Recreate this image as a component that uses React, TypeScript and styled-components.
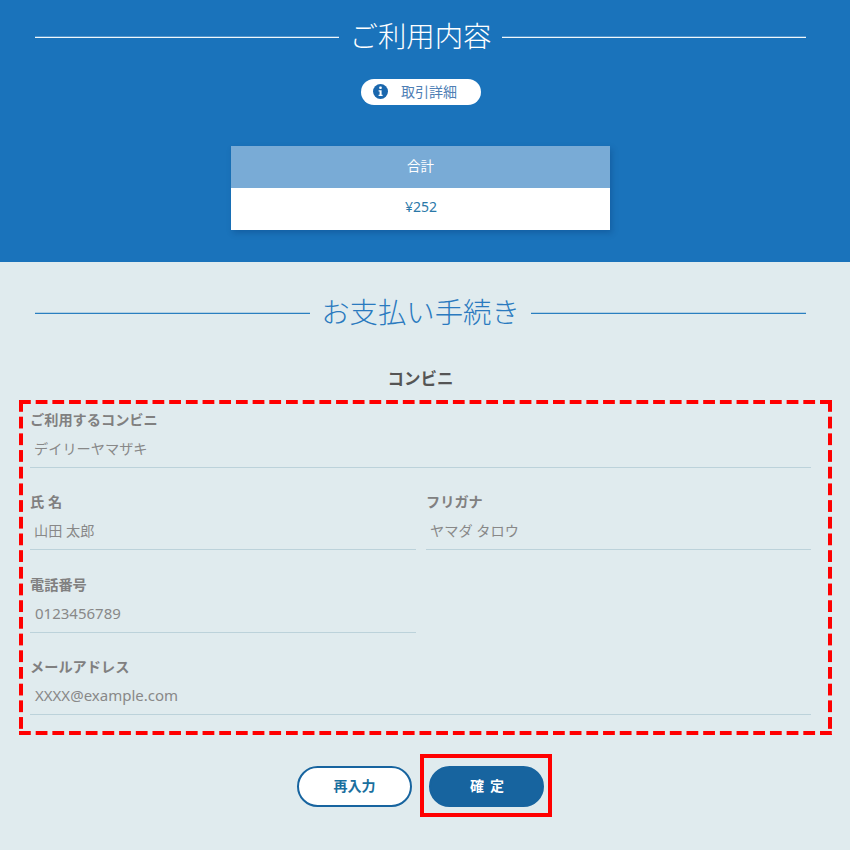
import styled, { createGlobalStyle } from "styled-components";

const GlobalStyle = createGlobalStyle`
  html, body {
    margin: 0;
    padding: 0;
    height: 850px;
    overflow: hidden;
    background: #e0ebee;
    font-family: "Noto Sans", "Noto Sans CJK JP", sans-serif;
  }
`;

const UsageSection = styled.section`
  height: 262px;
  box-sizing: border-box;
  background: #1a73bb;
  padding: 0 44px 0 35px;
  display: flex;
  flex-direction: column;
  align-items: center;
`;

const SectionTitle = styled.h2<{ $light?: boolean }>`
  align-self: stretch;
  box-sizing: border-box;
  height: 70px;
  margin: 0;
  padding-bottom: 2px;
  display: flex;
  align-items: center;
  gap: 11px;
  font-size: 28.4px;
  font-weight: 300;
  white-space: nowrap;
  color: ${(p) => (p.$light ? "#ffffff" : "#2a7abf")};

  &::before,
  &::after {
    content: "";
    flex: 1;
    height: 1px;
    margin-top: 6px;
    background: ${(p) => (p.$light ? "#f0f7fb" : "#2a7fc0")};
    box-shadow: 0 -1px 0
      ${(p) => (p.$light ? "rgba(255, 255, 255, 0.25)" : "rgba(42, 127, 192, 0.25)")};
  }
`;

const DetailPill = styled.button`
  width: 120px;
  height: 26px;
  margin: 9px 0 0 1px;
  padding: 0 0 2px 12px;
  border: 0;
  border-radius: 13px;
  background: #fff;
  color: #4f7fb5;
  font: 400 14px "Noto Sans CJK JP", sans-serif;
  display: flex;
  align-items: center;
  gap: 13px;
`;

const TotalCard = styled.div`
  width: 379px;
  margin-top: 41px;
  box-shadow: 2px 3px 6px rgba(0, 40, 90, 0.25);
`;

const TotalHead = styled.div`
  height: 37px;
  padding-bottom: 5px;
  display: flex;
  align-items: center;
  justify-content: center;
  background: #79abd6;
  color: #fff;
  font-size: 13.5px;
`;

const TotalValue = styled.div`
  height: 37px;
  padding: 0 0 5px 1px;
  display: flex;
  align-items: center;
  justify-content: center;
  background: #fff;
  color: #2a78a8;
  font-size: 14px;
`;

const PaymentSection = styled.section`
  padding: 14px 9px 0 0;
`;

const TitleRow = styled.div`
  padding: 0 35px;
`;

const MethodName = styled.h3`
  margin: 19px 0 0;
  height: 27px;
  line-height: 27px;
  text-align: center;
  font-size: 16.5px;
  font-weight: 700;
  color: #555;
`;

const dash = "linear-gradient(to right, #ff0000 12px, transparent 12px)";
const dashV = "linear-gradient(to bottom, #ff0000 12px, transparent 12px)";

const FormFrame = styled.div`
  box-sizing: border-box;
  width: 813px;
  height: 335px;
  margin: 8px 0 0 19px;
  padding: 10px 21px 0 11px;
  background-image: ${dash}, ${dash}, ${dashV}, ${dashV};
  background-size: 16.7px 4px, 16.7px 4px, 4px 16.7px, 4px 16.7px;
  background-position: 0 0, 0 100%, 0 0, 100% 0;
  background-repeat: repeat-x, repeat-x, repeat-y, repeat-y;
  display: grid;
  grid-template-columns: 386px 385px;
  column-gap: 10px;
  grid-auto-rows: 82.3px;
  align-content: start;
`;

const Field = styled.div<{ $wide?: boolean }>`
  grid-column: ${(p) => (p.$wide ? "1 / -1" : "auto")};
  align-self: start;
  border-bottom: 1px solid #bcd2da;
`;

const FieldLabel = styled.label`
  display: block;
  height: 20px;
  line-height: 20px;
  font-size: 14.2px;
  font-weight: 700;
  color: #808080;
`;

const FieldValue = styled.div<{ $latin?: boolean }>`
  height: 37px;
  line-height: 37px;
  padding-left: ${(p) => (p.$latin ? "5px" : "4px")};
  font-size: ${(p) => (p.$latin ? "15px" : "14.2px")};
  color: #888;
`;

const ButtonRow = styled.div`
  margin-top: 19px;
  padding-left: 8px;
  display: flex;
  justify-content: center;
  align-items: center;
  gap: 8px;
`;

const ActionButton = styled.button<{ $primary?: boolean }>`
  box-sizing: border-box;
  width: 115px;
  height: 41px;
  margin-top: 2px;
  padding: ${(p) => (p.$primary ? "0 0 3px 8px" : "0 0 3px")};
  border-radius: 21px;
  border: 2px solid #17649f;
  background: ${(p) => (p.$primary ? "#17649f" : "#fff")};
  color: ${(p) => (p.$primary ? "#fff" : "#1a6f9e")};
  font: 700 14px "Noto Sans CJK JP", sans-serif;
  letter-spacing: ${(p) => (p.$primary ? "6px" : "0")};
`;

const ConfirmFrame = styled.div`
  box-sizing: border-box;
  width: 132px;
  height: 63px;
  border: 4px solid #ff0000;
  display: flex;
  align-items: center;
  justify-content: center;
`;

const InfoIcon = () => (
  <svg width="15" height="15" viewBox="0 0 15 15">
    <circle cx="7.5" cy="7.5" r="7.5" fill="#1a67ad" />
    <rect x="6.3" y="2.6" width="2.4" height="2.3" rx="0.6" fill="#fff" />
    <path d="M5.6 6.2h3v4.6h1v1.3H5.6v-1.3h1V7.5h-1z" fill="#fff" />
  </svg>
);

const App = () => {
  return (
    <div>
      <GlobalStyle />
      <UsageSection>
        <SectionTitle $light>ご利用内容</SectionTitle>
        <DetailPill>
          <InfoIcon />
          取引詳細
        </DetailPill>
        <TotalCard>
          <TotalHead>合計</TotalHead>
          <TotalValue>¥252</TotalValue>
        </TotalCard>
      </UsageSection>
      <PaymentSection>
        <TitleRow>
          <SectionTitle>お支払い手続き</SectionTitle>
        </TitleRow>
        <MethodName>コンビニ</MethodName>
        <FormFrame>
          <Field $wide>
            <FieldLabel>ご利用するコンビニ</FieldLabel>
            <FieldValue>デイリーヤマザキ</FieldValue>
          </Field>
          <Field>
            <FieldLabel>氏 名</FieldLabel>
            <FieldValue>山田 太郎</FieldValue>
          </Field>
          <Field>
            <FieldLabel>フリガナ</FieldLabel>
            <FieldValue>ヤマダ タロウ</FieldValue>
          </Field>
          <Field>
            <FieldLabel>電話番号</FieldLabel>
            <FieldValue $latin>0123456789</FieldValue>
          </Field>
          <div />
          <Field $wide>
            <FieldLabel>メールアドレス</FieldLabel>
            <FieldValue $latin>XXXX@example.com</FieldValue>
          </Field>
        </FormFrame>
        <ButtonRow>
          <ActionButton>再入力</ActionButton>
          <ConfirmFrame>
            <ActionButton $primary>確定</ActionButton>
          </ConfirmFrame>
        </ButtonRow>
      </PaymentSection>
    </div>
  );
};

export default App;
